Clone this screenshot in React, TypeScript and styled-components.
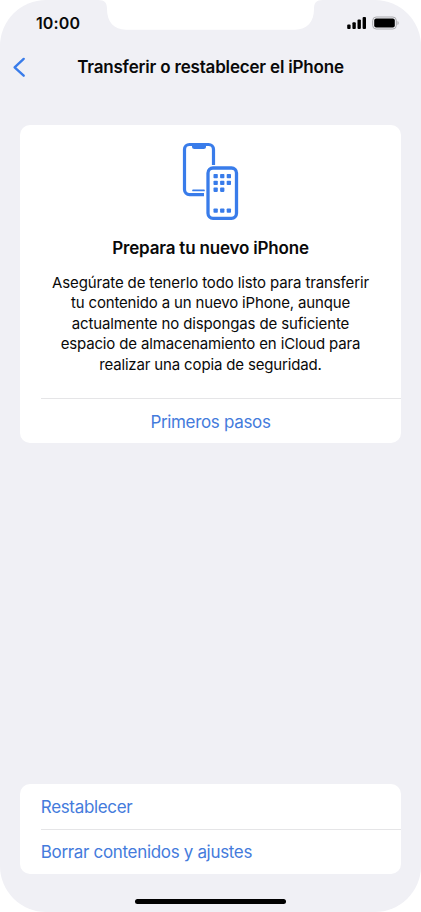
import React from "react";
import styled, { createGlobalStyle } from "styled-components";

const GlobalStyle = createGlobalStyle`
  * { box-sizing: border-box; }
  html, body { margin: 0; background: #fff; }
`;

const Screen = styled.main`
  position: relative;
  display: flex;
  flex-direction: column;
  width: 421px;
  height: 912px;
  overflow: hidden;
  background: #f0f0f5;
  border-radius: 46px;
  color: #090909;
  font-family: Inter, "Liberation Sans", sans-serif;
`;

const Notch = styled.svg`
  position: absolute;
  top: 0;
  left: 98px;
`;

const StatusBar = styled.header`
  display: flex;
  align-items: center;
  justify-content: space-between;
  height: 46px;
  padding: 0 22px 0 36px;
`;

const Time = styled.time`
  font-size: 16px;
  font-weight: 600;
  letter-spacing: 0.1px;
`;

const StatusIcons = styled.svg`
  display: block;
`;

const NavBar = styled.nav`
  display: grid;
  grid-template-columns: 40px 1fr 40px;
  align-items: center;
  height: 42px;
`;

const BackButton = styled.button`
  display: flex;
  padding: 0 0 0 12px;
  border: 0;
  background: none;
`;

const Title = styled.h1`
  margin: 0;
  font-size: 17px;
  line-height: 22px;
  font-weight: 600;
  text-align: center;
  white-space: nowrap;
  letter-spacing: -0.18px;
`;

const Card = styled.section`
  display: flex;
  flex-direction: column;
  width: 380.2px;
  margin-left: 20.4px;
  background: #fff;
  border-radius: 10px;
`;

const IntroCard = styled(Card)`
  height: 318px;
  margin-top: 37px;
`;

const Intro = styled.div`
  display: flex;
  flex-direction: column;
  align-items: center;
  height: 273px;
  padding-top: 17px;
`;

const Heading = styled(Title).attrs({ as: "h2" })`
  margin-top: 17px;
`;

const Description = styled.p`
  margin: 14px 0 0;
  font-size: 15px;
  line-height: 20.4px;
  text-align: center;
`;

const Line = styled.span<{ $spacing: number }>`
  display: block;
  white-space: nowrap;
  letter-spacing: ${(p) => p.$spacing}px;
`;

const Divider = styled.hr`
  width: 360px;
  height: 1px;
  margin: 0 0 0 auto;
  border: 0;
  background: #e5e5e7;
`;

const Action = styled.button<{ $align: "left" | "center" }>`
  flex: 1;
  padding: 1px 20.4px 0;
  border: 0;
  background: none;
  color: #447bdc;
  font-family: inherit;
  font-size: 17px;
  line-height: 22px;
  text-align: ${(p) => p.$align};
  letter-spacing: -0.33px;
`;

const ResetCard = styled(Card)`
  height: 90px;
  margin-top: auto;
  margin-bottom: 25px;
`;

const HomeIndicator = styled.div`
  width: 151px;
  height: 5px;
  flex-shrink: 0;
  margin: 0 auto 8px;
  border-radius: 3px;
  background: #000;
`;

const description = [
  { text: "Asegúrate de tenerlo todo listo para transferir", spacing: -0.13 },
  { text: "tu contenido a un nuevo iPhone, aunque", spacing: -0.16 },
  { text: "actualmente no dispongas de suficiente", spacing: -0.13 },
  { text: "espacio de almacenamiento en iCloud para", spacing: -0.15 },
  { text: "realizar una copia de seguridad.", spacing: -0.15 },
];

const appDots = [
  [213, 174], [219.6, 174], [226.2, 174],
  [213, 180.8], [219.6, 180.8], [226.2, 180.8],
  [213, 187.6], [219.6, 187.6],
  [213, 208.4], [219.6, 208.4], [226.2, 208.4],
];

const PhonesIcon = () => (
  <svg width="57" height="78" viewBox="182 142 57 78" fill="none" stroke="#397cea">
    <path d="M204 194.6H189.5a5 5 0 0 1-5-5V149.500a5 5 0 0 1 5-5H208.500a5 5 0 0 1 5 5V165" strokeWidth="3.200" />
    <path d="M192 144h14v2.500a2.500 2.500 0 0 1-2.500 2.500h-9a2.500 2.500 0 0 1-2.500-2.500z" fill="#397cea" stroke="none" />
    <path d="M193 190.400h11" strokeWidth="1.700" strokeLinecap="round" />
    <rect x="208" y="168" width="28.500" height="50.300" rx="5" strokeWidth="3.300" />
    {appDots.map(([x, y]) => (
      <rect key={`${x}-${y}`} x={x + 0.5} y={y} width="4.300" height="4.300" rx="0.800" fill="#397cea" stroke="none" />
    ))}
  </svg>
);

export default function App() {
  return (
    <>
      <GlobalStyle />
      <Screen>
        <Notch width="225" height="30" viewBox="98 0 225 30" aria-hidden>
          <path d="M98 0C105 0 107 3 107 9C107 22 114 29.700 126 29.700H295C307 29.700 314 22 314 9C314 3 316 0 323 0Z" fill="#fff" />
        </Notch>
        <StatusBar>
          <Time>10:00</Time>
          <StatusIcons width="53" height="14" viewBox="346 16 53 14">
            <rect x="347.200" y="24.500" width="3.400" height="4.500" rx="1" />
            <rect x="352.400" y="22.300" width="3.400" height="6.700" rx="1" />
            <rect x="357.500" y="19.600" width="3.400" height="9.400" rx="1" />
            <rect x="362.600" y="17" width="3.400" height="12" rx="1" />
            <rect x="372.700" y="17" width="23.600" height="12" rx="3.500" fill="none" stroke="#aaaaae" />
            <rect x="374.200" y="18.500" width="20.600" height="9" rx="2" />
            <path d="M397.500 21a2.300 2.300 0 0 1 0 4z" fill="#aaaaae" />
          </StatusIcons>
        </StatusBar>
        <NavBar>
          <BackButton aria-label="Atrás">
            <svg width="15" height="22" viewBox="12 56 15 22" fill="none">
              <path d="M23.700 58.900L14.600 67.300L23.700 75.700" stroke="#397cea" strokeWidth="2.400" strokeLinecap="round" strokeLinejoin="round" />
            </svg>
          </BackButton>
          <Title>Transferir o restablecer el iPhone</Title>
        </NavBar>
        <IntroCard>
          <Intro>
            <PhonesIcon />
            <Heading>Prepara tu nuevo iPhone</Heading>
            <Description>
              {description.map((line) => (
                <Line key={line.text} $spacing={line.spacing}>{line.text}</Line>
              ))}
            </Description>
          </Intro>
          <Divider />
          <Action $align="center">Primeros pasos</Action>
        </IntroCard>
        <ResetCard>
          <Action $align="left">Restablecer</Action>
          <Divider />
          <Action $align="left">Borrar contenidos y ajustes</Action>
        </ResetCard>
        <HomeIndicator />
      </Screen>
    </>
  );
}
